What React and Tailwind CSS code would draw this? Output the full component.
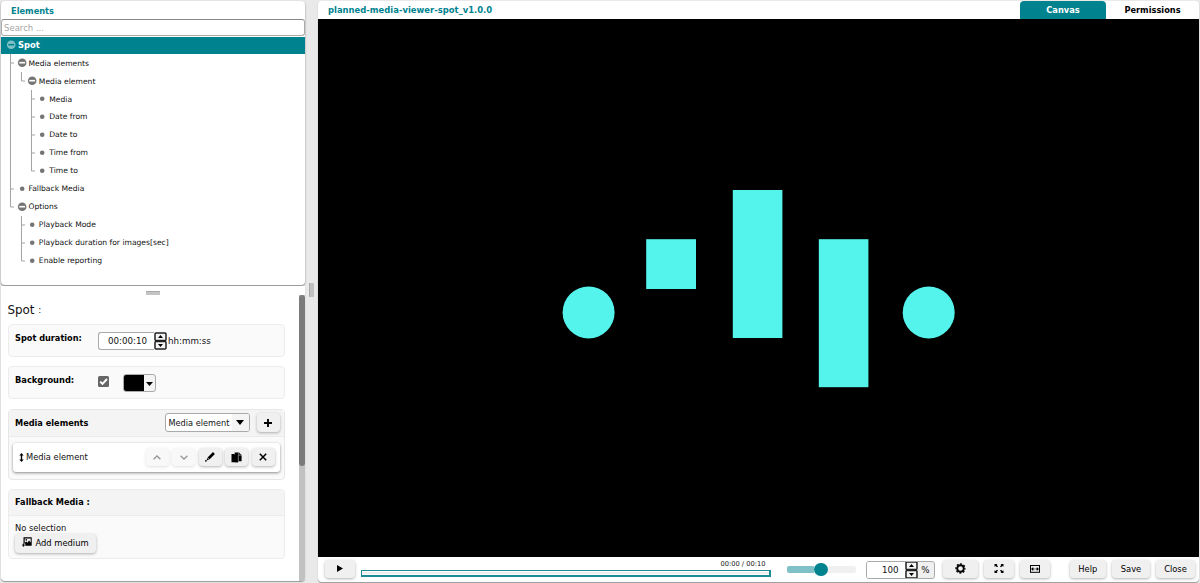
import React from 'react';

const TREE = [
  { guides: [], open: true, text: 'Spot', active: true },
  { guides: ['tee'], open: true, text: 'Media elements' },
  { guides: ['line', 'end'], open: true, text: 'Media element' },
  { guides: ['line', 'none', 'tee'], text: 'Media' },
  { guides: ['line', 'none', 'tee'], text: 'Date from' },
  { guides: ['line', 'none', 'tee'], text: 'Date to' },
  { guides: ['line', 'none', 'tee'], text: 'Time from' },
  { guides: ['line', 'none', 'end'], text: 'Time to' },
  { guides: ['tee'], text: 'Fallback Media' },
  { guides: ['end'], open: true, text: 'Options' },
  { guides: ['none', 'tee'], text: 'Playback Mode' },
  { guides: ['none', 'tee'], text: 'Playback duration for images[sec]' },
  { guides: ['none', 'end'], text: 'Enable reporting' },
];

const GUIDE_PATHS = {
  none: '',
  line: 'M4.5 0V18',
  tee: 'M4.5 0V18M4.5 9H8',
  end: 'M4.5 0V9H8',
};

function Guide({ kind }) {
  return (
    <svg className="h-full w-[10.4px] shrink-0" viewBox="0 0 10.4 17.93" fill="none" stroke="#a3a3a3">
      <path d={GUIDE_PATHS[kind]} />
    </svg>
  );
}

function NodeIcon({ open, active }) {
  return (
    <svg className="h-[10px] w-[10.4px] shrink-0" viewBox="0 0 10.4 10">
      {open ? (
        <>
          <circle cx="5.2" cy="4.7" r="4.3" fill={active ? '#80c1c6' : '#757575'} />
          <rect x="2.3" y="3.9" width="5.8" height="1.6" fill={active ? '#00838f' : '#fff'} />
        </>
      ) : (
        <circle cx="5.2" cy="4.8" r="2.3" fill="#757575" />
      )}
    </svg>
  );
}

function TreeRow({ node }) {
  return (
    <div
      className={
        'flex h-[17.93px] items-center pl-[5.3px] ' +
        (node.active ? 'bg-[#00838f] text-[8.4px] font-bold text-white' : 'text-[7.6px] text-[#111]')
      }
    >
      {node.guides.map((g, i) => (
        <Guide key={i} kind={g} />
      ))}
      <NodeIcon open={node.open} active={node.active} />
      <span className="ml-[1.4px] whitespace-nowrap">{node.text}</span>
    </div>
  );
}

function Btn({ className = '', children, ...rest }) {
  return (
    <button
      className={
        'flex shrink-0 items-center justify-center rounded-[4px] bg-[#f0f0f0] text-black shadow-[0_1px_3px_rgba(0,0,0,0.3)] ' +
        className
      }
      {...rest}
    >
      {children}
    </button>
  );
}

function Spinner({ className = '' }) {
  return (
    <svg className={'shrink-0 ' + className} viewBox="0 0 13 18" preserveAspectRatio="none">
      <rect x="1" y="1" width="11" height="7.4" rx="1" fill="#f4f4f4" stroke="#222" strokeWidth="1.5" />
      <rect x="1" y="9.6" width="11" height="7.4" rx="1" fill="#f4f4f4" stroke="#222" strokeWidth="1.5" />
      <path d="M4 6L6.5 3L9 6ZM4 12L6.5 15L9 12Z" fill="#000" />
    </svg>
  );
}

function LeftTop() {
  return (
    <section className="h-[283.5px] shrink-0 overflow-hidden rounded-[4px] bg-white shadow-[0_1px_2px_rgba(0,0,0,0.45)]">
      <div className="flex h-[18px] items-center pl-[10px] pt-[1.5px] text-[8.25px] font-bold text-[#00838f]">Elements</div>
      <input
        className="block h-[17px] w-full rounded-[3px] border border-[#aaa] border-t-[#888] bg-white pl-[2px] text-[8.5px] leading-none outline-none placeholder:text-[#a6a6a6]"
        placeholder="Search ..."
      />
      <div className="pt-[0.5px]">
        {TREE.map((n) => (
          <TreeRow key={n.text} node={n} />
        ))}
      </div>
    </section>
  );
}

function Details() {
  return (
    <div className="w-[298px] pl-[6.5px] text-[8.3px] text-[#111]">
      <h1 className="flex h-[29px] items-center pt-[3px] text-[11.9px]">
        Spot&nbsp;<span className="text-[9px]">:</span>
      </h1>
      <div className="flex h-[33px] w-[277px] rounded-[4px] border border-[#ececec] bg-[#fafafa] pl-[6.5px]">
        <div className="w-[82.5px] pt-[7px] text-[8.2px] font-bold leading-[12px] text-black">Spot duration:</div>
        <div className="mt-[7px] flex h-[18px] items-center">
          <div className="flex h-full w-[56px] items-center justify-end rounded-l-[3px] border border-r-0 border-[#aaa] bg-white pr-[6.5px] pt-px text-[8.7px]">
            00:00:10
          </div>
          <Spinner className="h-[18px] w-[13px]" />
          <span className="ml-[1.5px] pt-px text-[8.7px]">hh:mm:ss</span>
        </div>
      </div>
      <div className="mt-[9px] flex h-[33px] w-[277px] rounded-[4px] border border-[#ececec] bg-[#fafafa] pl-[6.5px]">
        <div className="w-[82.5px] pt-[7px] text-[8.3px] font-bold leading-[12px] text-black">Background:</div>
        <svg className="mt-[9px] h-[11px] w-[11px]" viewBox="0 0 11 11">
          <rect width="11" height="11" rx="1.5" fill="#666" />
          <path d="M2.2 5.6L4.5 7.9L9 3" fill="none" stroke="#fff" strokeWidth="1.9" />
        </svg>
        <div className="ml-[14.5px] mt-[7px] flex h-[18px] w-[33px] overflow-hidden rounded-[3px] border border-[#aaa] bg-[#f4f4f4]">
          <div className="w-[20px] bg-black" />
          <svg className="mx-auto mt-[7px] h-[4px] w-[7px]" viewBox="0 0 7 4">
            <path d="M0 0H7L3.5 4Z" />
          </svg>
        </div>
      </div>
      <div className="mt-[9.5px] h-[71px] w-[277px] rounded-[4px] border border-[#e6e6e6] bg-[#fafafa]">
        <div className="flex h-[27px] items-center border-b border-[#ececec] bg-[#f4f4f4] pl-[6.5px] pr-[4px] text-[8.2px]">
          <span className="flex-1 pt-px font-bold text-black">Media elements</span>
          <div className="flex h-[18.5px] w-[85px] items-center justify-between overflow-hidden rounded-[3px] border border-[#aaa] bg-white pl-[3px] text-[8.2px]">
            <span className="whitespace-nowrap pt-px">Media element</span>
            <span className="flex h-full w-[17px] items-center justify-center bg-[#f4f4f4]">
              <svg className="h-[5px] w-[8px]" viewBox="0 0 8 5">
                <path d="M0 0H8L4 5Z" />
              </svg>
            </span>
          </div>
          <Btn className="ml-[7px] h-[19px] w-[23px]" aria-label="Add">
            <svg className="size-[8px]" viewBox="0 0 8 8" stroke="#000" strokeWidth="1.9">
              <path d="M4 0V8M0 4H8" />
            </svg>
          </Btn>
        </div>
        <div className="ml-[4px] mt-[6px] flex h-[29px] w-[267.5px] items-center rounded-[3px] bg-white pl-[6.5px] pr-[5.5px] shadow-[0_1px_3px_rgba(0,0,0,0.45)]">
          <svg className="h-[9px] w-[5px]" viewBox="0 0 5 9">
            <path d="M2.5 0L4.7 2.5H3.2V6.5H4.7L2.5 9L0.3 6.5H1.8V2.5H0.3Z" />
          </svg>
          <span className="ml-[2px] flex-1">Media element</span>
          <div className="flex gap-[3.5px]">
            <Btn className="h-[18px] w-[23px] opacity-40" aria-label="Up">
              <svg className="h-[5px] w-[8px]" viewBox="0 0 8 5" fill="none" stroke="#000" strokeWidth="1.4">
                <path d="M.6 4.3L4 1L7.4 4.3" />
              </svg>
            </Btn>
            <Btn className="h-[18px] w-[23px] opacity-40" aria-label="Down">
              <svg className="h-[5px] w-[8px]" viewBox="0 0 8 5" fill="none" stroke="#000" strokeWidth="1.4">
                <path d="M.6 .7L4 4L7.4 .7" />
              </svg>
            </Btn>
            <Btn className="h-[18px] w-[23px]" aria-label="Edit">
              <svg className="size-[10px]" viewBox="0 0 10 10">
                <path d="M8 0.1L9.9 1.9L4.5 7.4L2.5 5.6ZM2.1 6L4 7.8L2.5 8.3L1.7 7.4Z" />
                <circle cx="0.9" cy="8.8" r="0.9" />
              </svg>
            </Btn>
            <Btn className="h-[18px] w-[23px]" aria-label="Copy">
              <svg className="size-[11px]" viewBox="0 0 11 11">
                <path d="M0.5 2H7V10.3H0.5Z" />
                <path d="M3.6 0.6H8L10.6 3V9.3H7.2V10.3H3.6Z" />
                <path d="M3.7 1.8V2.6M7.7 0.6V3.2H10.6M7.3 3.2V9.2" fill="none" stroke="#f0f0f0" strokeWidth="0.5" />
              </svg>
            </Btn>
            <Btn className="h-[18px] w-[23px]" aria-label="Remove">
              <svg className="size-[8px]" viewBox="0 0 8 8" stroke="#000" strokeWidth="1.5">
                <path d="M.8 .8L7.2 7.2M7.2 .8L.8 7.2" />
              </svg>
            </Btn>
          </div>
        </div>
      </div>
      <div className="mt-[9px] h-[70.5px] w-[277px] rounded-[4px] border border-[#ececec] bg-[#fafafa]">
        <div className="flex h-[26px] items-center border-b border-[#ececec] bg-[#f4f4f4] pl-[6.5px] pt-px text-[8.2px] font-bold text-black">
          Fallback Media :
        </div>
        <div className="pl-[6.5px] pt-[7.5px]">
          <div className="h-[11px] leading-[11px]">No selection</div>
          <Btn className="h-[18.5px] w-[80.5px] justify-start gap-[3.5px] pl-[7px] text-[8.35px]">
            <svg className="-mt-[3px] h-[10px] w-[10px]" viewBox="0 0 10 10">
              <path fillRule="evenodd" d="M1.5 0.3H9.7V8.7H3.3V6.5H1.5ZM2.7 1.5V5.8L4.3 4.6L5.4 5.7L7 3.5L8.7 5.4V1.5Z" />
              <circle cx="4.3" cy="2.9" r="0.8" />
              <path d="M1.4 6.4V9.8M0 8.1H3" stroke="#000" strokeWidth="0.9" />
            </svg>
            <span className="pt-px">Add medium</span>
          </Btn>
        </div>
      </div>
    </div>
  );
}

function Stage() {
  return (
    <svg className="block h-[538px] w-[881px] bg-black" viewBox="318 19 881 538" fill="#54f4ec">
      <circle cx="588.6" cy="312.4" r="26" />
      <rect x="646.2" y="239.2" width="49.8" height="49.8" />
      <rect x="732.8" y="190" width="49.6" height="148" />
      <rect x="818.8" y="239.2" width="49.6" height="148" />
      <circle cx="928.7" cy="312.4" r="26" />
    </svg>
  );
}

function Footer() {
  return (
    <footer className="flex h-[25px] items-start pl-[6.5px] pt-[2.5px] text-[8.35px] text-[#111]">
      <Btn className="h-[18.5px] w-[30px]" aria-label="Play">
        <svg className="h-[7px] w-[6px]" viewBox="0 0 6 7">
          <path d="M0 0L6 3.5L0 7Z" />
        </svg>
      </Btn>
      <div className="ml-[6px] flex w-[410px] shrink-0 flex-col">
        <div className="h-[10px] pr-[5px] text-right text-[6.7px] leading-[9px]">00:00 / 00:10</div>
        <div className="h-[7px] bg-[#1c8b94] p-[1.4px]">
          <div className="h-full bg-white py-px">
            <div className="h-full bg-[#eee]" />
          </div>
        </div>
      </div>
      <div className="ml-[16px] mt-[3px] flex h-[14px] w-[69px] shrink-0 items-center">
        <div className="h-[7px] w-[27.5px] rounded-l-[2px] bg-[#80c1c7]" />
        <div className="size-[13.5px] rounded-full bg-[#00838f]" />
        <div className="h-[7px] flex-1 rounded-r-[2px] bg-[#f0f0f0]" />
      </div>
      <div className="ml-[10px] mt-[1.5px] flex h-[18px] w-[69px] shrink-0 overflow-hidden rounded-[3px] border border-[#aaa] bg-[#f0f0f0]">
        <div className="flex flex-1 items-center justify-end bg-white pr-[6px] pt-px text-[8.7px]">100</div>
        <Spinner className="-mt-px h-[18px] w-[13px]" />
        <div className="flex w-[16px] items-center justify-center pt-px text-[8.7px]">%</div>
      </div>
      <Btn className="ml-[8.5px] h-[18.5px] w-[35px]" aria-label="Settings">
        <svg className="size-[11px]" viewBox="0 0 11 11">
          <circle cx="5.5" cy="5.5" r="3.3" fill="none" stroke="#000" strokeWidth="1.9" />
          <circle cx="5.5" cy="5.5" r="4.5" fill="none" stroke="#000" strokeWidth="1.3" strokeDasharray="1.9 1.634" strokeDashoffset="0.95" />
        </svg>
      </Btn>
      <Btn className="ml-[6px] h-[18.5px] w-[30px]" aria-label="Fit to screen">
        <svg className="h-[9px] w-[10px]" viewBox="0 0 10 9">
          <path d="M0.5 0H3.3L2.8 0.9L4 2.4L3 3.3L1.6 2L0.5 2.8ZM9.5 0H6.7L7.2 0.9L6 2.4L7 3.3L8.4 2L9.5 2.8ZM0.5 9H3.3L2.8 8.1L4 6.6L3 5.7L1.6 7L0.5 6.2ZM9.5 9H6.7L7.2 8.1L6 6.6L7 5.7L8.4 7L9.5 6.2Z" />
        </svg>
      </Btn>
      <Btn className="ml-[6px] h-[18.5px] w-[30px]" aria-label="Fit width">
        <svg className="h-[8px] w-[10px]" viewBox="0 0 10 8">
          <rect x="0.5" y="0.5" width="9" height="6.8" fill="none" stroke="#000" />
          <path d="M1 4L3.2 2V3.4H4.5V4.6H3.2V6ZM9 4L6.8 2V3.4H5.5V4.6H6.8V6Z" />
        </svg>
      </Btn>
      <Btn className="ml-[19.5px] h-[18px] w-[36.5px] pt-px">Help</Btn>
      <Btn className="ml-[6px] h-[18px] w-[38px] pt-px">Save</Btn>
      <Btn className="ml-[6px] h-[18px] w-[39px] pt-px">Close</Btn>
    </footer>
  );
}

export default function App() {
  return (
    <main className="flex h-[583px] w-[1200px] overflow-hidden bg-[#e9e9e9] pl-px pt-px font-['DejaVu_Sans',sans-serif]">
      <aside className="flex w-[304px] shrink-0 flex-col">
        <LeftTop />
        <section className="mt-[1.5px] h-[295px] overflow-hidden rounded-b-[4px] bg-white shadow-[0_1px_1px_rgba(0,0,0,0.35)]">
          <div className="flex h-[9px] items-end justify-center">
            <div className="h-[4px] w-[14px] border-t border-[#aaa] bg-[#c4c4c4]" />
          </div>
          <div className="flex h-[286px]">
            <Details />
            <div className="h-full flex-1 bg-[#c1c1c1]">
              <div className="h-[171px] rounded-[3px] bg-[#7b7b7b]" />
            </div>
          </div>
        </section>
      </aside>
      <div className="flex w-[13px] shrink-0 items-center justify-center pb-[5px]">
        <div className="h-[14px] w-[4.5px] border-l border-[#aaa] bg-[#c0c0c0]" />
      </div>
      <section className="h-[581px] w-[881px] shrink-0 overflow-hidden rounded-[4px] bg-white shadow-[0_1px_1px_rgba(0,0,0,0.35)]">
        <header className="flex h-[18px] items-stretch pl-[10px] text-[8.25px] font-bold">
          <div className="flex flex-1 items-center pt-[1.5px] text-[8.43px] text-[#00838f]">planned-media-viewer-spot_v1.0.0</div>
          <div className="flex w-[86px] items-center justify-center rounded-t-[4px] bg-[#00838f] text-white">Canvas</div>
          <div className="flex w-[93px] items-center justify-center text-black">Permissions</div>
        </header>
        <Stage />
        <Footer />
      </section>
    </main>
  );
}
